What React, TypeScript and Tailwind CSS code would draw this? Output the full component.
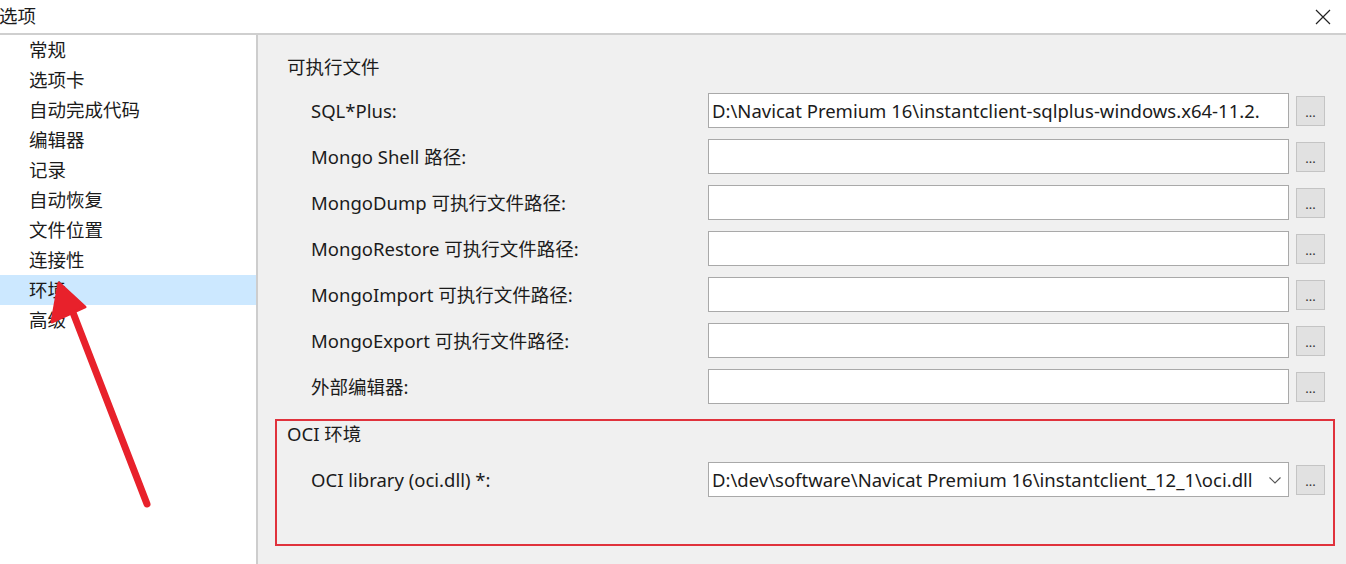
import React from "react";

const navItems = ["常规", "选项卡", "自动完成代码", "编辑器", "记录", "自动恢复", "文件位置", "连接性", "环境", "高级"];

const rows: { label: string; value: string }[] = [
  { label: "SQL*Plus:", value: "D:\\Navicat Premium 16\\instantclient-sqlplus-windows.x64-11.2." },
  { label: "Mongo Shell 路径:", value: "" },
  { label: "MongoDump 可执行文件路径:", value: "" },
  { label: "MongoRestore 可执行文件路径:", value: "" },
  { label: "MongoImport 可执行文件路径:", value: "" },
  { label: "MongoExport 可执行文件路径:", value: "" },
  { label: "外部编辑器:", value: "" },
];

function Dots() {
  return (
    <div className="w-[29px] h-[30px] ml-[7px] shrink-0 bg-[#e1e1e1] border border-[#c4c4c4] flex items-center justify-center text-[13px] text-[#333] leading-none pt-[3px]">
      ...
    </div>
  );
}

export default function App() {
  const font = { fontFamily: '"Noto Sans", "Noto Sans CJK SC", sans-serif' };
  return (
    <div className="relative w-[1346px] h-[564px] overflow-hidden bg-white text-[#1b1b1b]" style={font}>
      {/* Title bar */}
      <div className="h-[33px] flex items-center justify-between border-b-2 border-[#cfcfcf] box-content">
        <span className="text-[18.5px] leading-none ml-[-1px]">选项</span>
        <svg width="16" height="16" viewBox="0 0 16 16" className="mr-[15px]">
          <path d="M1 1 L15 15 M15 1 L1 15" stroke="#222" strokeWidth="1.2" fill="none" />
        </svg>
      </div>
      <div className="flex h-[529px]">
        {/* Left nav */}
        <div className="w-[256px] bg-white border-r-2 border-[#cdcdcd] box-content">
          {navItems.map((n) => (
            <div
              key={n}
              className={`h-[30px] flex items-center pl-[29px] text-[18.5px] ${n === "环境" ? "bg-[#cce8ff]" : ""}`}
            >
              {n}
            </div>
          ))}
        </div>
        {/* Right content */}
        <div className="flex-1 bg-[#f0f0f0] text-[18.5px]">
          <div className="pl-[29px] pt-[20px] h-[44px] leading-[24px]">可执行文件</div>
          <div className="mt-[14px] flex flex-col gap-[11px] pl-[53px]">
            {rows.map((r) => (
              <div key={r.label} className="flex items-center h-[35px]">
                <div className="w-[397px] shrink-0">{r.label}</div>
                <div className="w-[581px] h-[35px] shrink-0 bg-white border border-[#a9a9a9] flex items-center px-[3px] whitespace-nowrap overflow-hidden">
                  {r.value}
                </div>
                <Dots />
              </div>
            ))}
          </div>
          <div className="mt-[15px] ml-[17px] mr-[11px] h-[127px] border-2 border-[#e0323c]">
            <div className="pl-[10px] pt-[1px] leading-[24px]">OCI 环境</div>
            <div className="flex items-center h-[35px] mt-[16px] pl-[34px]">
              <div className="w-[397px] shrink-0">OCI library (oci.dll) *:</div>
              <div className="w-[581px] h-[35px] shrink-0 bg-white border border-[#a9a9a9] flex items-center pl-[3px] whitespace-nowrap overflow-hidden">
                <span className="flex-1 overflow-hidden">D:\dev\software\Navicat Premium 16\instantclient_12_1\oci.dll</span>
                <svg width="14" height="10" viewBox="0 0 14 10" className="mx-[6px] shrink-0">
                  <path d="M1.5 2.5 L7 8 L12.5 2.5" stroke="#555" strokeWidth="1.1" fill="none" />
                </svg>
              </div>
              <Dots />
            </div>
          </div>
        </div>
      </div>
      {/* Red annotation arrow */}
      <svg className="absolute left-0 top-0 pointer-events-none" width="1346" height="564">
        <line x1="147" y1="504" x2="72" y2="310" stroke="#e8212b" strokeWidth="7" strokeLinecap="round" />
        <polygon points="59,283 52,322 85,307" fill="#e8212b" stroke="#e8212b" strokeWidth="3" strokeLinejoin="round" />
      </svg>
    </div>
  );
}
